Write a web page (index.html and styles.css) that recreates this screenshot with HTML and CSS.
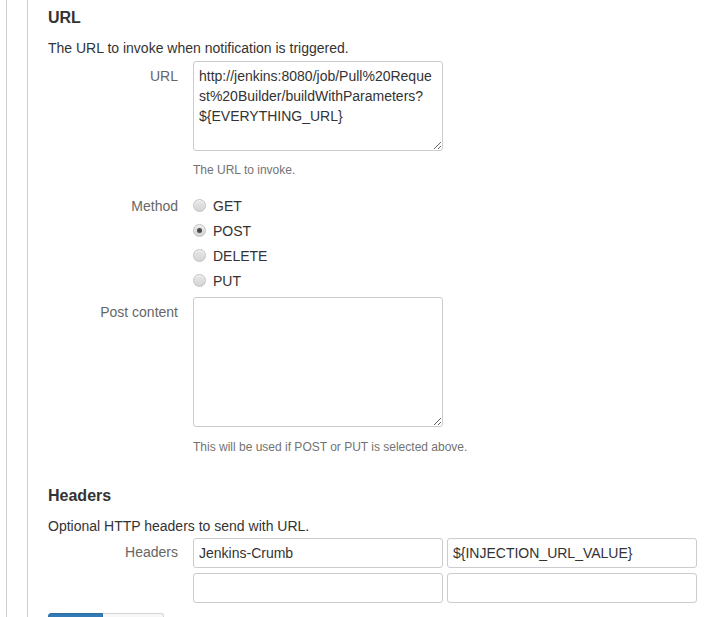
FILE: index.html
```html
<!DOCTYPE html>
<html>
<head>
<meta charset="utf-8">
<link rel="stylesheet" href="styles.css">
</head>
<body>
<div class="outer">
  <div class="frame">
    <div class="inner">
      <h3 class="heading">URL</h3>
      <p class="desc">The URL to invoke when notification is triggered.</p>
      <div class="row row-first">
        <label class="label">URL</label>
        <div class="field">
          <textarea class="ta ta-url">http://jenkins:8080/job/Pull%20Request%20Builder/buildWithParameters?
${EVERYTHING_URL}</textarea>
          <div class="help">The URL to invoke.</div>
        </div>
      </div>
      <div class="row row-method">
        <label class="label label-m">Method</label>
        <div class="radios">
          <div class="radio"><span class="dot"></span><span>GET</span></div>
          <div class="radio"><span class="dot checked"></span><span>POST</span></div>
          <div class="radio"><span class="dot"></span><span>DELETE</span></div>
          <div class="radio"><span class="dot"></span><span>PUT</span></div>
        </div>
      </div>
      <div class="row">
        <label class="label">Post content</label>
        <div class="field">
          <textarea class="ta ta-post"></textarea>
          <div class="help help-post">This will be used if POST or PUT is selected above.</div>
        </div>
      </div>

      <h3 class="heading heading-2">Headers</h3>
      <p class="desc">Optional HTTP headers to send with URL.</p>
      <div class="row row-headers">
        <label class="label label-h">Headers</label>
        <div class="grid">
          <input class="inp" type="text" value="Jenkins-Crumb">
          <input class="inp" type="text" value="${INJECTION_URL_VALUE}">
          <input class="inp" type="text" value="">
          <input class="inp" type="text" value="">
        </div>
      </div>
      <div class="btn-group">
        <span class="btn-blue"></span><span class="btn-gray"></span>
      </div>
    </div>
  </div>
</div>
</body>
</html>
```
FILE: styles.css
```css
html, body {
  margin: 0;
  padding: 0;
  background: #fff;
  height: 100%;
  overflow: hidden;
}
body {
  font-family: "Liberation Sans", Arial, sans-serif;
  font-size: 14px;
  line-height: 20px;
  color: #333;
}
.outer {
  padding-left: 6px;
  height: 100%;
}
.frame {
  border-left: 1px solid #cfcfcf;
  padding-left: 20px;
  height: 100%;
}
.inner {
  border-left: 1px solid #cfcfcf;
  padding-left: 20px;
  padding-top: 8px;
  height: 100%;
  box-sizing: border-box;
}
.heading {
  margin: 0;
  font-size: 16px;
  line-height: 20px;
  font-weight: bold;
  color: #333;
}
.heading-2 {
  margin-top: 30px;
}
.desc {
  margin: 10px 0 0;
}
.row {
  display: flex;
  gap: 15px;
}
.row-first {
  margin-top: 3px;
}
.row-method {
  margin-top: 13px;
}
.row-headers {
  margin-top: 2px;
}
.label {
  width: 130px;
  flex: none;
  text-align: right;
  color: #666;
  padding-top: 5px;
}
.label-m {
  padding-top: 4px;
}
.label-h {
  padding-top: 4px;
}
.field {
  display: flex;
  flex-direction: column;
}
.ta {
  display: block;
  width: 250px;
  box-sizing: border-box;
  margin: 0;
  border: 1px solid #ccc;
  border-radius: 3px;
  padding: 4px 5px;
  font-family: "Liberation Sans", Arial, sans-serif;
  font-size: 14px;
  line-height: 20px;
  color: #333;
  overflow: hidden;
  resize: vertical;
  background: #fff;
}
.ta-url {
  height: 90px;
}
.ta-post {
  height: 130px;
}
.help {
  margin-top: 11px;
  font-size: 12px;
  line-height: 17px;
  color: #737373;
}
.help-post {
  margin-top: 12px;
}
.radios {
  padding-top: 4px;
  padding-bottom: 1px;
}
.radio {
  display: flex;
  align-items: center;
  height: 20px;
  margin-bottom: 5px;
  gap: 7px;
}
.dot {
  width: 11px;
  height: 11px;
  border-radius: 50%;
  border: 1px solid #c2c2c2;
  background: linear-gradient(#e8e8e8, #d4d4d4);
  position: relative;
  top: -1px;
  box-shadow: inset 0 1px 1px rgba(255,255,255,0.6);
}
.dot.checked::after {
  content: "";
  position: absolute;
  left: 3px;
  top: 3px;
  width: 5px;
  height: 5px;
  border-radius: 50%;
  background: #4a4a4a;
}
.grid {
  display: grid;
  grid-template-columns: 250px 250px;
  column-gap: 4px;
  row-gap: 5px;
}
.inp {
  box-sizing: border-box;
  width: 250px;
  height: 30px;
  margin: 0;
  border: 1px solid #ccc;
  border-radius: 3px;
  padding: 4px 5px;
  font-family: "Liberation Sans", Arial, sans-serif;
  font-size: 14px;
  line-height: 20px;
  color: #333;
  background: #fff;
  outline: none;
}
.btn-group {
  display: flex;
  margin-top: 10px;
  width: 116px;
}
.btn-blue {
  width: 55px;
  height: 30px;
  background: #337ab7;
  border: 1px solid #2e6da4;
  border-radius: 3px 0 0 3px;
  box-sizing: border-box;
}
.btn-gray {
  width: 61px;
  height: 30px;
  background: #f7f7f7;
  border: 1px solid #d4d4d4;
  border-left: none;
  border-radius: 0 3px 3px 0;
  box-sizing: border-box;
}
```
